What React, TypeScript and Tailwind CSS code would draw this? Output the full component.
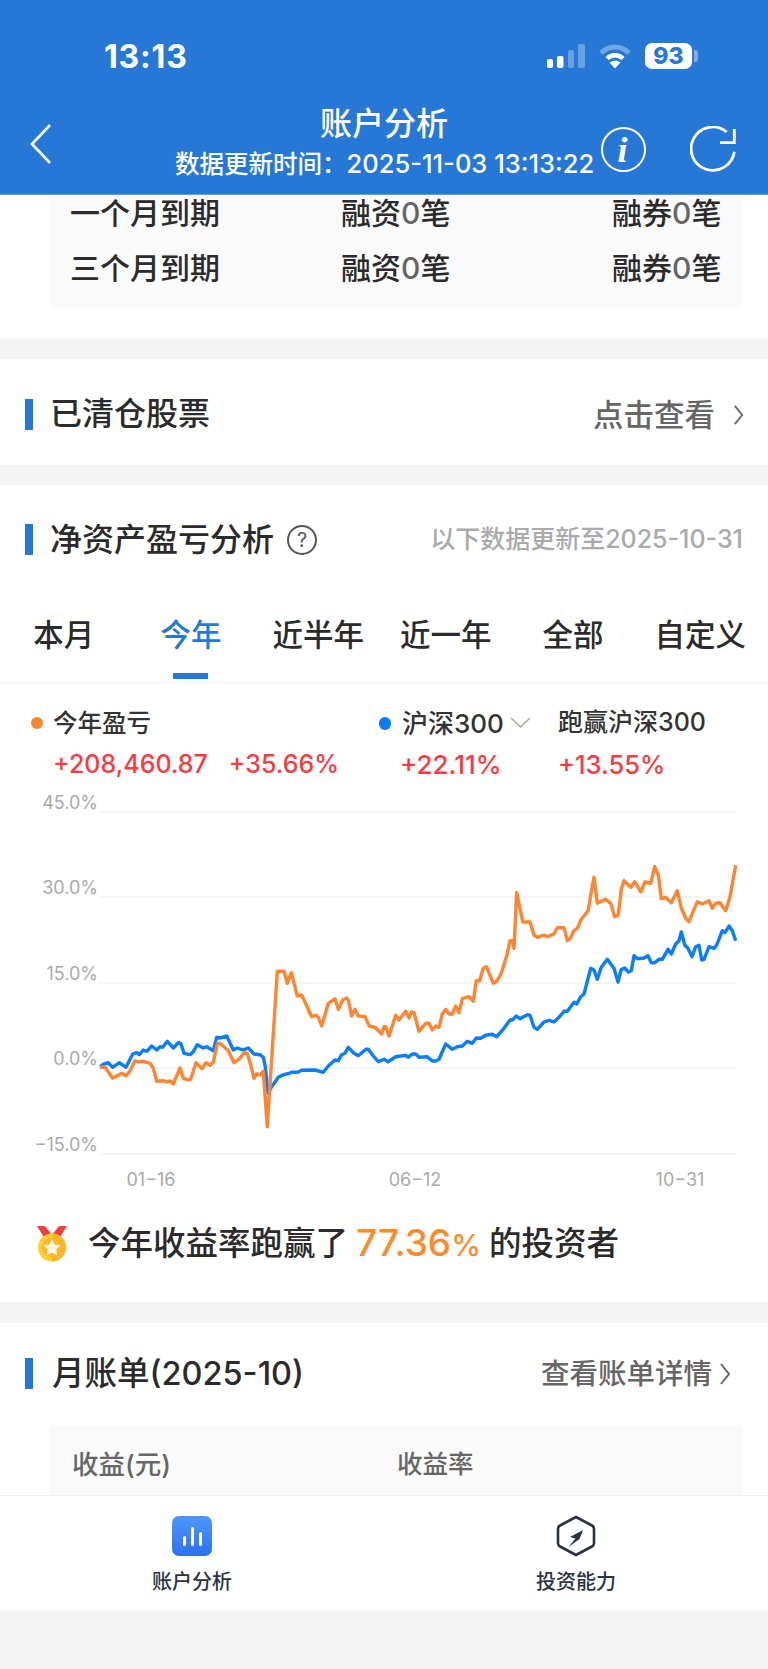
import React from "react";

const toPts = (ox: number, a: number[]) => {
  const out: string[] = [];
  for (let i = 0; i < a.length; i += 2) out.push(`${(ox + a[i] / 3).toFixed(1)},${(780 + a[i + 1] / 3).toFixed(1)}`);
  return out.join(" ");
};

const blueL = [300,860,312,852,325,848,338,862,358,848,378,862,398,822,410,818,418,824,430,810,440,814,455,798,470,810,480,800,488,802,502,784,520,804,535,788,542,790,552,820,570,824,580,815,592,794,610,804,620,800,640,812,650,772,660,774,680,768,700,810,712,804,730,810,745,804,762,822,780,824,790,832,796,860,804,940,815,920,835,892,850,884,865,881,875,877,895,876,905,871,945,870,970,877,985,858,1005,840,1015,842,1025,824,1035,820,1045,802,1060,818,1075,827,1098,808,1105,808,1120,828,1135,845,1152,838];
const blueR = [0,838,12,845,35,830,50,828,65,826,72,832,85,822,95,822,105,832,130,830,145,843,155,843,165,838,185,792,205,808,220,800,235,798,250,784,265,790,277,774,290,775,305,766,325,763,338,770,360,745,378,720,385,720,397,708,408,716,430,704,438,706,450,742,460,748,480,726,495,721,510,726,525,712,540,694,550,694,570,667,578,672,590,650,600,642,620,565,630,570,640,598,652,562,670,538,690,565,702,606,712,568,722,564,733,576,742,572,750,527,760,536,780,534,792,527,802,548,812,548,825,538,835,538,852,508,862,522,875,492,885,482,892,456,902,495,912,505,924,530,935,500,945,496,953,540,960,538,975,500,990,505,998,495,1015,452,1023,458,1035,438,1045,452,1055,482];
const orangeL = [300,862,315,862,338,895,365,880,378,888,390,872,405,842,415,846,430,844,450,850,460,865,470,904,490,902,500,906,510,903,520,912,540,864,550,895,565,900,572,898,588,848,605,866,618,848,630,856,640,846,652,792,660,790,685,812,702,848,720,835,732,818,742,820,752,855,762,895,770,882,780,884,790,874,802,1040,832,574,852,574,862,610,874,578,892,648,905,645,935,710,948,706,955,712,965,738,985,670,1000,660,1005,656,1015,688,1028,660,1040,654,1045,660,1055,708,1065,688,1075,708,1095,710,1108,738,1125,742,1145,762,1152,740];
const orangeR = [0,740,5,740,15,768,35,706,45,720,65,694,75,714,82,696,90,698,105,754,125,730,135,730,145,750,155,738,165,742,175,702,185,688,195,702,205,702,215,678,225,698,235,656,255,650,268,664,277,602,287,602,297,566,307,560,328,610,338,604,350,584,368,528,378,482,385,482,390,505,398,338,416,426,438,426,450,466,460,472,480,465,490,470,510,462,520,443,540,443,550,482,558,476,570,452,580,445,592,418,612,392,630,292,640,370,665,358,680,370,692,410,703,404,712,328,720,302,740,322,752,305,770,336,783,306,800,310,812,260,823,285,832,356,845,352,862,368,880,332,892,385,905,415,915,425,940,365,955,372,975,362,985,385,995,370,1008,368,1025,392,1038,350,1055,256];

const Chevron = ({ className = "" }: { className?: string }) => (
  <svg viewBox="0 0 12 24" className={className} fill="none" stroke="currentColor" strokeWidth="2">
    <path d="M2 2 L10 12 L2 22" />
  </svg>
);

const Bar = () => <div className="ml-[25px] mr-[17px] h-[31px] w-[8px] shrink-0 bg-[#2778d6]" />;

const Row = ({ label }: { label: string }) => (
  <div className="grid h-[38px] grid-cols-[271px_271px_1fr] items-center pb-[2px] text-[30px] font-medium leading-[36px] text-[#2b2b2b]">
    <div>{label}</div>
    <div className="whitespace-nowrap">融资<span className="text-[#666]">0</span>笔</div>
    <div className="whitespace-nowrap">融券<span className="text-[#666]">0</span>笔</div>
  </div>
);

const Tab = ({ label, active }: { label: string; active?: boolean }) => (
  <div className="flex flex-col items-center">
    <div className={`h-[40px] whitespace-nowrap text-[30.5px] font-medium leading-[41px] ${active ? "text-[#2778d6]" : "text-[#2b2b2b]"}`}>{label}</div>
    <div className={`mt-[19px] h-[6px] w-[35px] ${active ? "bg-[#2778d6]" : ""}`} />
  </div>
);

export default function App() {
  return (
    <div className="flex h-[1669px] w-[768px] flex-col overflow-hidden bg-[#f4f4f4] font-[family-name:Inter,'Noto_Sans_CJK_SC',sans-serif]">
      {/* Header */}
      <div className="h-[195px] shrink-0 border-b border-[#5a9de8] bg-[#2778d6] text-white">
        <div className="flex h-[114px] items-start justify-between pl-[104px] pr-[70px] pt-[38px]">
          <div className="text-[32px] font-bold leading-[38px] tracking-[0.8px]">13:13</div>
          <div className="flex items-center pt-[5px]">
            <svg width="38" height="24" viewBox="0 0 38 24" fill="#fff">
              <rect x="0" y="15" width="6" height="9" rx="2" />
              <rect x="10" y="12" width="6.5" height="12" rx="2" />
              <rect x="21" y="6" width="6" height="18" rx="2" opacity="0.3" />
              <rect x="31" y="0" width="7" height="24" rx="2" opacity="0.3" />
            </svg>
            <svg className="ml-[13px]" width="34" height="25" viewBox="0 0 34 25" fill="none">
              <path d="M3 9 C11 1 23 1 31 9" stroke="#fff" strokeOpacity="0.35" strokeWidth="5" />
              <path d="M9 14.5 C13.5 10 20.5 10 25 14.5" stroke="#fff" strokeWidth="4.5" />
              <path d="M17 24.5 L11.5 18.5 C14.5 16 19.5 16 22.5 18.5 Z" fill="#fff" />
            </svg>
            <div className="ml-[13px] flex h-[26px] w-[47px] items-center justify-center rounded-[7px] bg-white text-[23px] font-extrabold leading-[26px] text-[#2778d6]">93</div>
            <div className="ml-[2px] h-[12px] w-[4px] rounded-r-[3px] bg-white/40" />
          </div>
        </div>
        <div className="relative h-[80px]">
          <svg className="absolute left-[29px] top-[9px]" width="24" height="42" viewBox="0 0 24 42" fill="none" stroke="#fff" strokeWidth="2.6">
            <path d="M21 2 L3 21 L21 40" />
          </svg>
          <div className="absolute left-0 top-[-12px] w-full text-center text-[32px] font-medium leading-[44px]">账户分析</div>
          <div className="absolute left-[175px] top-[33px] whitespace-nowrap text-[24.5px] font-medium leading-[34px]">数据更新时间：<span className="text-[25.5px]">2025-11-03 13:13:22</span></div>
          <div className="absolute left-[601px] top-[13px] flex h-[45px] w-[45px] items-center justify-center rounded-full border-[2.5px] border-white pr-[2px] font-['Liberation_Serif',serif] text-[36px] font-bold italic leading-[40px]">i</div>
          <svg className="absolute left-[690px] top-[12px]" width="46" height="47" viewBox="0 0 46 47" fill="none" stroke="#fff" strokeWidth="2.8">
            <path d="M36.7 6 A21.7 21.7 0 1 0 44.3 25.7" />
            <path d="M30 16.7 L44.3 16.7 L44.3 3" />
          </svg>
        </div>
      </div>

      {/* Main */}
      <div className="min-h-0 flex-1 overflow-hidden">
        <div className="bg-white pb-[30px]">
          <div className="ml-[49px] h-[113px] w-[694px] rounded-b-[4px] bg-[#fafafa] pl-[21px]">
            <Row label="一个月到期" />
            <div className="h-[17px]" />
            <Row label="三个月到期" />
          </div>
        </div>

        <div className="mt-[21px] flex h-[106px] items-start bg-white pt-[40px]">
          <Bar />
          <div className="h-[31px] flex-1 text-[32px] font-medium leading-[30px] text-[#2b2b2b]">已清仓股票</div>
          <div className="flex h-[31px] items-center text-[30.5px] font-medium leading-[31px] text-[#666]">
            点击查看
            <Chevron className="ml-[18px] mr-[24px] h-[22px] w-[11px]" />
          </div>
        </div>

        <div className="mt-[20px] bg-white pt-[39px]">
          <div className="flex h-[31px] items-center">
            <Bar />
            <div className="text-[32px] font-medium leading-[31px] text-[#2b2b2b]">净资产盈亏分析</div>
            <div className="ml-[13px] flex h-[30px] w-[30px] items-center justify-center rounded-full border-2 border-[#555] text-[20px] leading-[26px] text-[#555]">?</div>
            <div className="ml-auto mr-[25px] text-[25px] font-medium leading-[31px] text-[#aaa]">以下数据更新至2025-10-31</div>
          </div>

          <div className="mt-[59px] grid grid-cols-6 border-b border-[#efefef] pb-[3px] pr-[4px]">
            <Tab label="本月" />
            <Tab label="今年" active />
            <Tab label="近半年" />
            <Tab label="近一年" />
            <Tab label="全部" />
            <Tab label="自定义" />
          </div>

          <div className="mt-[22px] flex">
            <div className="w-[379px] pl-[31px]">
              <div className="flex h-[36px] items-center text-[24.5px] font-medium text-[#333]">
                <span className="mr-[10px] h-[12px] w-[12px] rounded-full bg-[#ff8533]" />今年盈亏
              </div>
              <div className="mt-[6px] flex h-[36px] items-center pl-[22px] text-[25px] font-medium text-[#fb3a3f]">
                <span className="whitespace-nowrap">+208,460.87</span>
                <span className="ml-[21px] whitespace-nowrap">+35.66%</span>
              </div>
            </div>
            <div className="w-[179px]">
              <div className="flex h-[36px] items-center text-[26px] font-medium text-[#333]">
                <span className="mr-[11px] h-[13px] w-[12px] rounded-full bg-[#0a7cff]" />
                <span className="whitespace-nowrap">沪深300</span>
                <svg className="ml-[6px]" width="21" height="12" viewBox="0 0 21 12" fill="none" stroke="#aaa" strokeWidth="1.6"><path d="M1 1 L10.5 10 L20 1" /></svg>
              </div>
              <div className="mt-[6px] h-[36px] pl-[21px] text-[26px] font-medium leading-[36px] text-[#fb3a3f]">+22.11%</div>
            </div>
            <div>
              <div className="flex h-[36px] items-center whitespace-nowrap text-[25px] font-medium text-[#333]">跑赢沪深300</div>
              <div className="mt-[6px] h-[36px] text-[25.5px] font-medium leading-[36px] text-[#fb3a3f]">+13.55%</div>
            </div>
          </div>

          <svg className="mt-[7px] block" width="768" height="405" viewBox="0 790 768 405" fill="none">
            {[812, 897, 983, 1068, 1154].map((y) => (
              <line key={y} x1="99" x2="736" y1={y} y2={y} stroke="#f2f2f2" strokeWidth="1.3" />
            ))}
            {[["45.0%", 809], ["30.0%", 894], ["15.0%", 980], ["0.0%", 1065], ["−15.0%", 1151]].map(([t, y]) => (
              <text key={t} x="98" y={y as number} textAnchor="end" fontSize="18" fill="#aaa">{t}</text>
            ))}
            {[["01−16", 151], ["06−12", 415], ["10−31", 680]].map(([t, x]) => (
              <text key={t} x={x as number} y="1186" textAnchor="middle" fontSize="18" fill="#aaa">{t}</text>
            ))}
            <polyline points={toPts(0, blueL) + " " + toPts(384, blueR)} stroke="#0a7cff" strokeWidth="3.4" strokeLinejoin="round" />
            <polyline points={toPts(0, orangeL) + " " + toPts(384, orangeR)} stroke="#ff8533" strokeWidth="3.4" strokeLinejoin="round" />
          </svg>

          <div className="mt-[29px] flex h-[40px] items-center pl-[37px] text-[32.5px] font-medium leading-[44px] text-[#2b2b2b]">
            <svg width="30" height="36" viewBox="0 0 30 36" className="mr-[21px] shrink-0">
              <path d="M0 0 H8 L15 9 L22 0 H30 L22 13 H8 Z" fill="#f0403c" />
              <circle cx="15" cy="21.5" r="14" fill="#ffd02e" />
              <path d="M15 7.5 A14 14 0 0 1 15 35.5 Z" fill="#f9b62a" />
              <circle cx="15" cy="21.5" r="10" fill="#ffb52e" />
              <path d="M15 13 L17.6 18.6 L23.6 19.3 L19.2 23.4 L20.4 29.4 L15 26.4 L9.6 29.4 L10.8 23.4 L6.4 19.3 L12.4 18.6 Z" fill="#fff6dc" />
            </svg>
            今年收益率跑赢了
            <span className="ml-[8px] mr-[8px] whitespace-nowrap font-medium text-[#ff8a2a]">
              <span className="text-[37px]">77.36</span><span className="text-[30px]">%</span>
            </span>
            的投资者
          </div>
          <div className="h-[38px]" />
        </div>

        <div className="mt-[21px] bg-white pt-[35px]">
          <div className="flex h-[31px] items-center">
            <Bar />
            <div className="whitespace-nowrap pl-[2px] text-[32.5px] font-medium leading-[31px] text-[#2b2b2b]">月账单(2025-10)</div>
            <div className="ml-auto flex items-center text-[28.5px] font-medium leading-[31px] text-[#666]">
              查看账单详情
              <Chevron className="ml-[7px] mr-[37px] h-[24px] w-[12px]" />
            </div>
          </div>
          <div className="ml-[49px] mt-[36px] flex h-[70px] w-[694px] items-start bg-[#fafafa] pl-[23px] pt-[21px] text-[25.5px] font-medium leading-[36px] text-[#666]">
            <div className="w-[325px] text-[26.5px]">收益(元)</div>
            <div>收益率</div>
          </div>
        </div>
      </div>

      {/* Bottom bar */}
      <div className="grid h-[115px] shrink-0 grid-cols-2 border-t border-[#f0f0f0] bg-white">
        <div className="flex flex-col items-center pt-[20px]">
          <div className="flex h-[40px] w-[40px] items-end justify-center gap-[5px] rounded-[7px] bg-gradient-to-b from-[#4f96fb] to-[#2a72f2] pb-[10px]">
            <div className="h-[10px] w-[3px] rounded-full bg-white" />
            <div className="h-[19px] w-[3px] rounded-full bg-white" />
            <div className="h-[14px] w-[3px] rounded-full bg-white" />
          </div>
          <div className="mt-[14px] h-[24px] text-[20px] font-medium leading-[24px] text-[#2a3340]">账户分析</div>
        </div>
        <div className="flex flex-col items-center pt-[19px]">
          <svg width="40" height="42" viewBox="0 0 40 42" fill="none">
            <path d="M20 2 L36 10.5 Q38 11.5 38 14 V28 Q38 30.5 36 31.5 L20 40 L4 31.5 Q2 30.5 2 28 V14 Q2 11.5 4 10.5 Z" stroke="#2a3340" strokeWidth="2.6" strokeLinejoin="round" />
            <path d="M27 15 L14 22 L19.5 23.5 L12.5 32 L23.5 24 Z" fill="#2a3340" />
          </svg>
          <div className="mt-[13px] h-[24px] text-[20px] font-medium leading-[24px] text-[#2a3340]">投资能力</div>
        </div>
      </div>
      <div className="h-[59px] shrink-0" />
    </div>
  );
}
